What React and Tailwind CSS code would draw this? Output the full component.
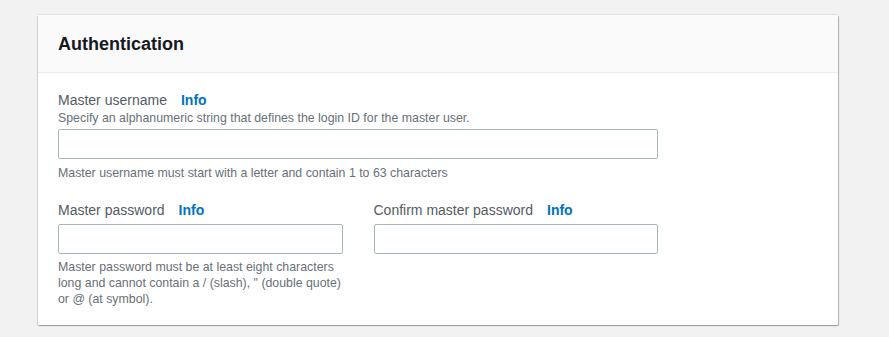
export default function App() {
    return (
        <div className="min-h-[337px] bg-[#f2f2f2] pt-[15px] pl-[38px] pr-[51px] font-['Liberation_Sans',Arial,sans-serif]">
            <div className="w-[800px] bg-white rounded-[1px] shadow-[1px_1px_1px_0_rgba(0,28,36,0.3),-1px_1px_1px_0_rgba(0,28,36,0.15),0_-1px_1px_0_rgba(0,28,36,0.08)]">
                {/* Header */}
                <div className="h-[58px] bg-[#fafafa] border-b border-[#eaeded] px-[20px] flex items-center">
                    <h2 className="text-[18px] font-bold text-[#16191f] leading-[22px]">
                        Authentication
                    </h2>
                </div>

                {/* Body */}
                <div className="px-[20px] pt-[17px] pb-[18px]">
                    <div className="w-[600px]">
                        <div className="flex items-center gap-[14px] text-[14px] leading-[20px]">
                            <span className="text-[#545b64]">Master username</span>
                            <span className="text-[#0073bb] font-bold">Info</span>
                        </div>
                        <p className="text-[12.35px] leading-[16px] text-[#687078]">
                            Specify an alphanumeric string that defines the login ID for the master user.
                        </p>
                        <input
                            type="text"
                            className="mt-[3px] block w-full h-[30px] border border-[#aab7b8] rounded-[2px] bg-white"
                        />
                        <p className="mt-[6px] text-[12.35px] leading-[16px] text-[#687078]">
                            Master username must start with a letter and contain 1 to 63 characters
                        </p>
                    </div>

                    <div className="mt-[19px] w-[600px] grid grid-cols-2 gap-x-[31px]">
                        <div>
                            <div className="flex items-center gap-[14px] text-[14px] leading-[20px]">
                                <span className="text-[#545b64]">Master password</span>
                                <span className="text-[#0073bb] font-bold">Info</span>
                            </div>
                            <input
                                type="password"
                                className="mt-[4px] block w-full h-[30px] border border-[#aab7b8] rounded-[2px] bg-white"
                            />
                            <p className="mt-[5px] text-[12.35px] leading-[16px] text-[#687078]">
                                Master password must be at least eight characters long and cannot contain a / (slash), " (double quote) or @ (at symbol).
                            </p>
                        </div>
                        <div>
                            <div className="flex items-center gap-[14px] text-[14px] leading-[20px]">
                                <span className="text-[#545b64]">Confirm master password</span>
                                <span className="text-[#0073bb] font-bold">Info</span>
                            </div>
                            <input
                                type="password"
                                className="mt-[4px] block w-full h-[30px] border border-[#aab7b8] rounded-[2px] bg-white"
                            />
                        </div>
                    </div>
                </div>
            </div>
        </div>
    );
}
